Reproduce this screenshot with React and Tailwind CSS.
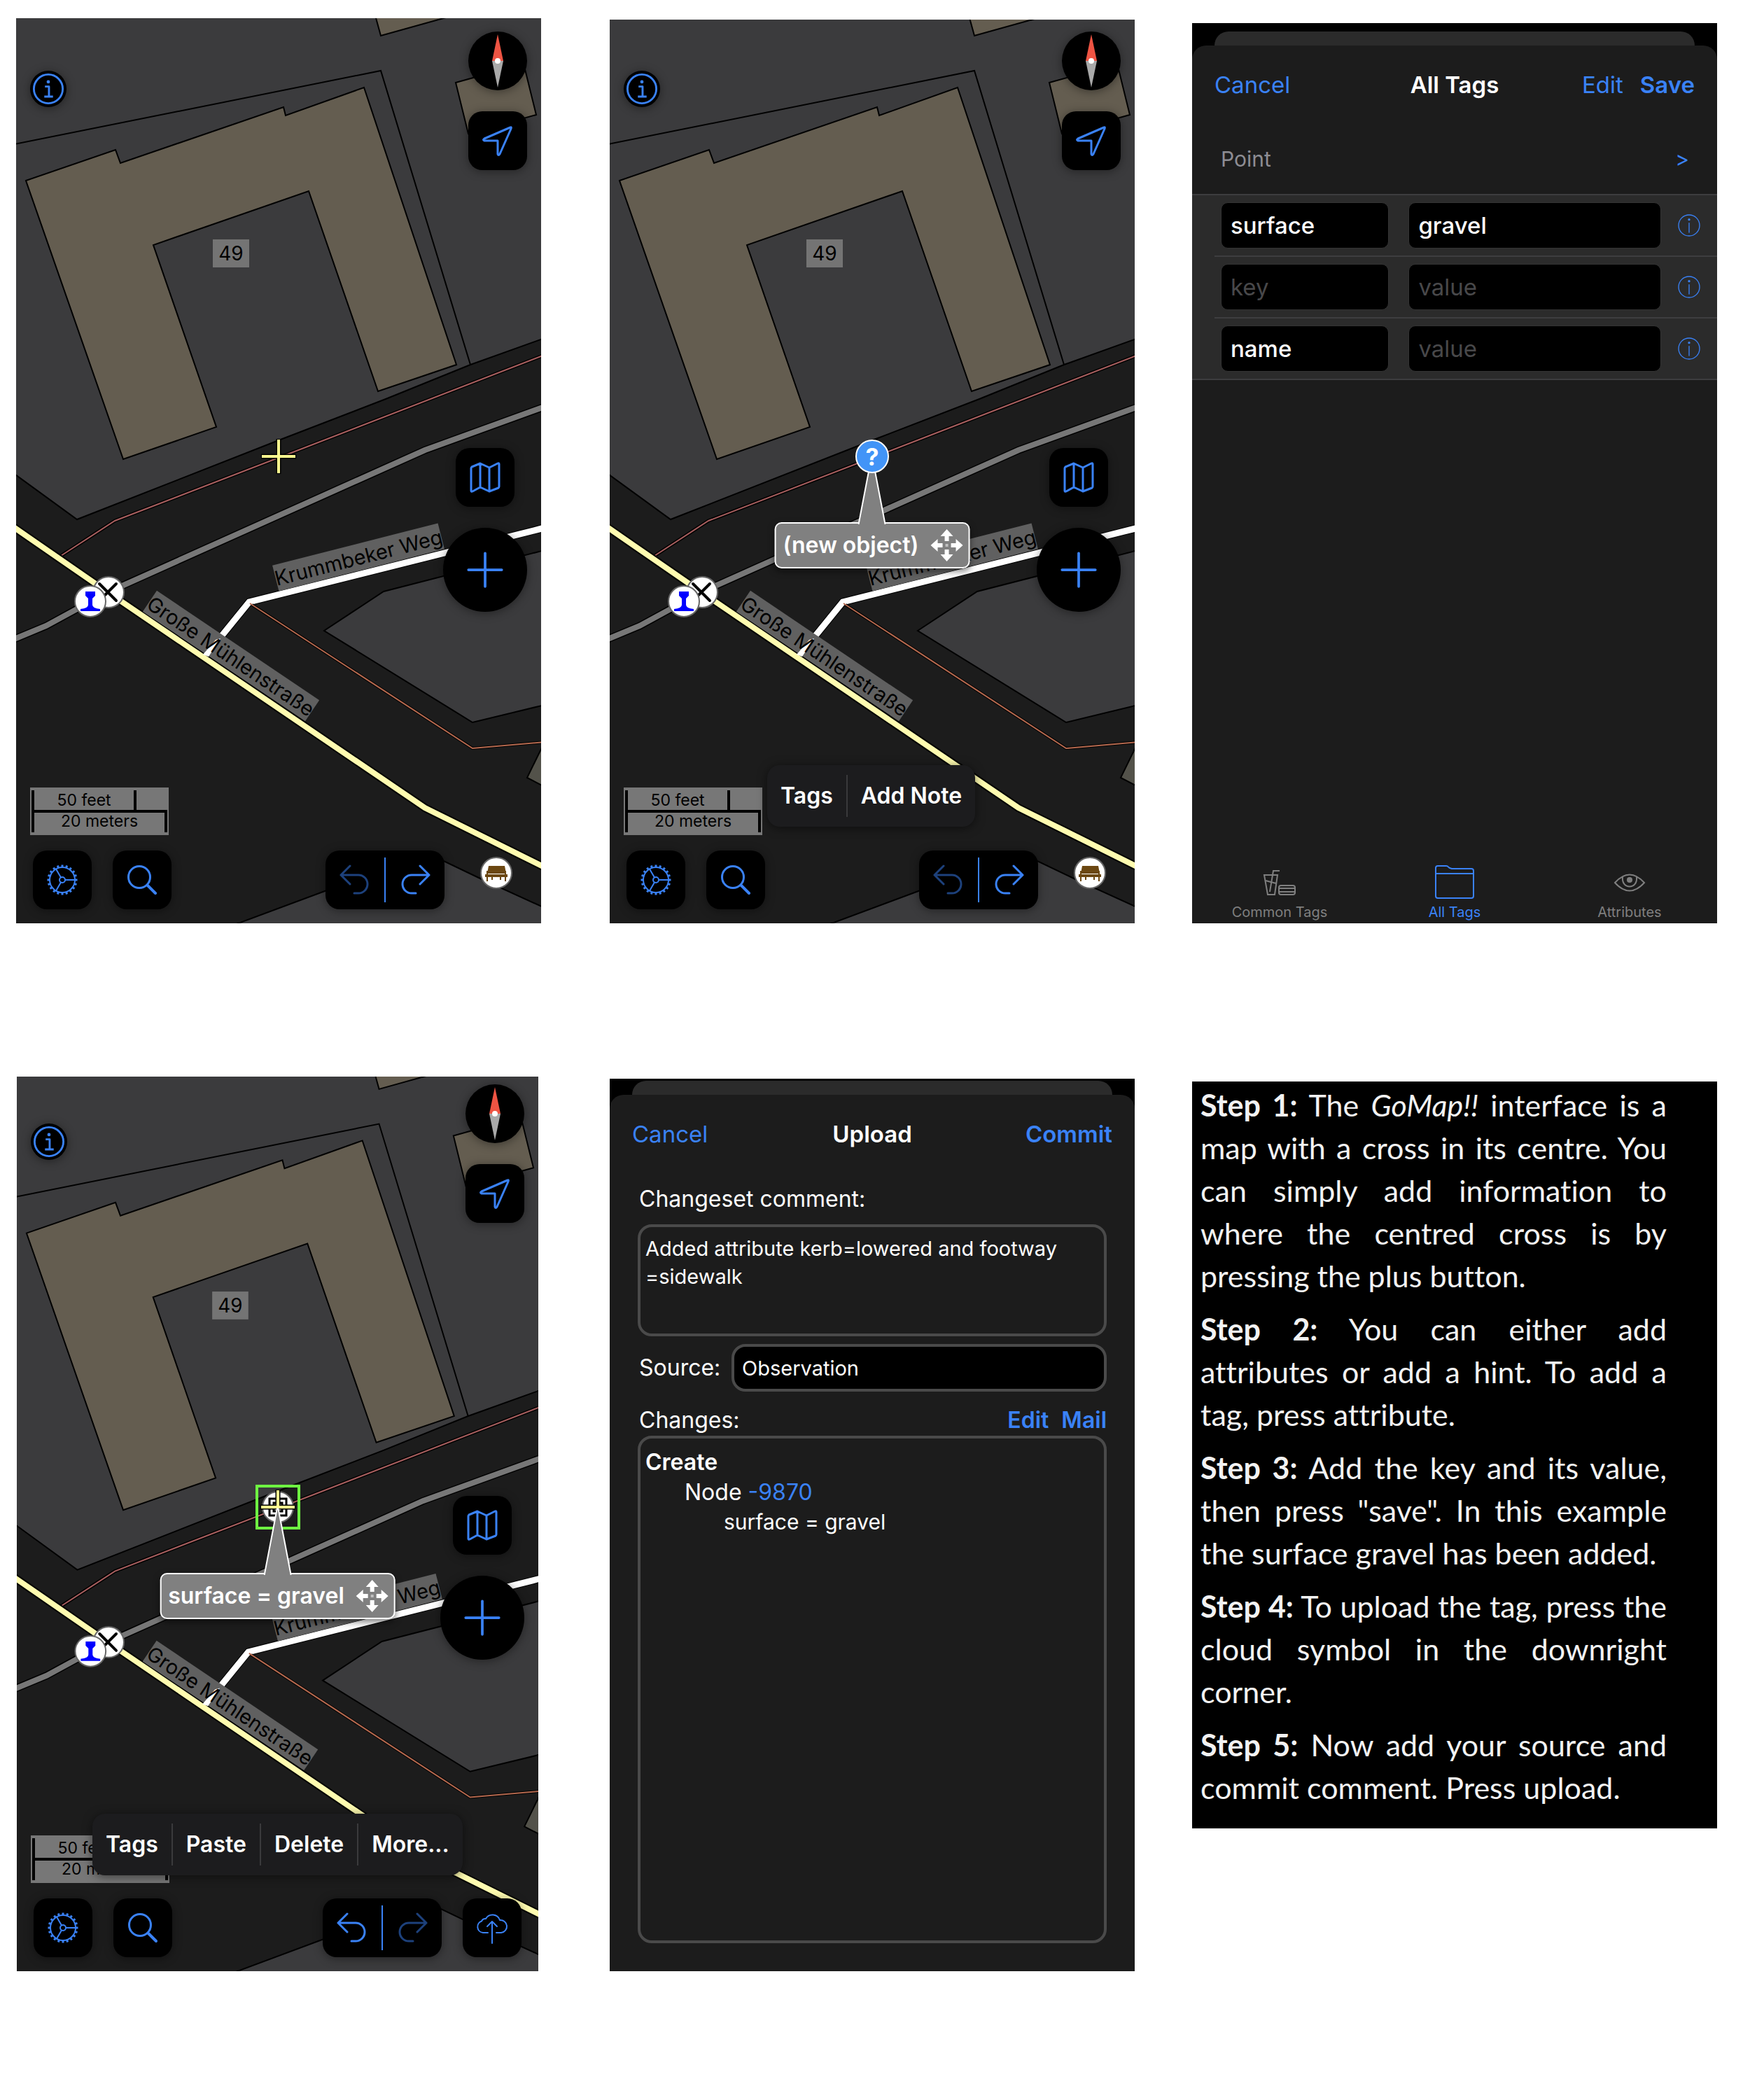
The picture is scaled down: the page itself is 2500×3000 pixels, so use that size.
import React from "react";

const BLUE = "#3a82f7";

function MapDrawing({ viewBox, bench = true }) {
  return (
    <svg className="absolute inset-0 h-full w-full" viewBox={viewBox} preserveAspectRatio="none" aria-hidden="true">
      <rect width="750" height="1293" fill="#1c1c1c" />
      <g stroke="#000" strokeWidth="2">
        <path fill="#3b3b3d" d="M-5 -5H755V457L649 495 528 544 375 603 87 716 -5 649Z" />
        <path fill="#3b3b3d" d="M440 875 525 819 755 760V981L652 1006Z" />
        <path fill="#3b3b3d" d="M312 1295 441 1247 588 1193 663 1229 755 1271V1300H312Z" />
        <path fill="none" d="M-2 180 521 75 649 495" />
        <g fill="#645d50">
          <path d="M513 -4 521 25 625 -4Z" />
          <path d="M628 92 725 65 743 138 646 165Z" />
          <path d="M14 232 142 188 149 207 382 127 385 139 497 99 629 495 517 533 418 247 196 324 286 584 153 630Z" />
        </g>
        <path fill="#53524a" d="M755 1034 730 1085 755 1098Z" />
      </g>
      <g fill="none">
        <path stroke="#000" strokeWidth="5" d="M64 768 141 718 411 614 755 481" />
        <path stroke="#a85f5f" strokeWidth="2" d="M64 768 141 718 411 614 755 481" />
        <path stroke="#000" strokeWidth="11" d="M-5 888 43 868 131 820 584 617 755 555" />
        <path stroke="#777" strokeWidth="8" d="M-5 888 43 868 131 820 584 617 755 555" />
        <path stroke="#000" strokeWidth="11" d="M268 914 333 834 755 728" />
        <path stroke="#fff" strokeWidth="9" d="M268 914 333 834 755 728" />
        <path stroke="#000" strokeWidth="4" d="M337 838 652 1043 755 1034" />
        <path stroke="#b5694f" strokeWidth="2" d="M334 836 652 1043 755 1034" />
        <path stroke="#000" strokeWidth="12" d="M-5 726 131 820 584 1128 755 1213" />
        <path stroke="#fffcb0" strokeWidth="8" d="M-5 726 131 820 584 1128 755 1213" />
      </g>
      <g fontFamily="Inter, sans-serif" fontSize="29" textAnchor="middle">
        <rect x="281" y="316" width="52" height="40" fill="#747474" />
        <text x="307" y="346" fontSize="28">
          49
        </text>
        <g transform="translate(489 770) rotate(-14.3)">
          <rect x="-122" y="-19" width="244" height="38" fill="#606060" />
          <text y="11">Krummbeker Weg</text>
        </g>
        <g transform="translate(307 911) rotate(34)">
          <rect x="-140" y="-18" width="280" height="36" fill="#606060" />
        </g>
        <path fill="#fff" d="M267 909 285 888 292 886 275 912Z" />
        <g transform="translate(307 911) rotate(34)">
          <text y="11">Große Mühlenstraße</text>
        </g>
      </g>
      <g stroke="#666" strokeWidth="2" fill="#fff">
        <circle cx="132" cy="820" r="22" />
        <path stroke="#000" strokeWidth="4" strokeLinecap="round" d="M119 808 143 832M143 808 119 832" />
        <circle cx="106" cy="833" r="22" />
        <path fill="#00f" stroke="none" d="M99 819H113V825L109 829V838Q109 843 120 844V847H92V844Q103 843 103 838V829L99 825Z" />
        {bench && <circle cx="686" cy="1221" r="22" />}
        {bench && (
          <g fill="#6b4712" stroke="none">
            <path d="M675 1211H698L700 1222H673Z" />
            <path d="M670 1223H702V1227H670ZM672 1218H674V1233H672ZM698 1218H700V1233H698ZM679 1227H681V1231H679ZM691 1227H693V1231H691Z" />
          </g>
        )}
      </g>
    </svg>
  );
}

function Icon({ children, className = "h-12 w-12", width = 3 }) {
  return (
    <svg
      className={className}
      viewBox="0 0 48 48"
      fill="none"
      stroke={BLUE}
      strokeWidth={width}
      strokeLinecap="round"
      strokeLinejoin="round"
      aria-hidden="true"
    >
      {children}
    </svg>
  );
}

const TEETH = Array.from({ length: 20 }, (_, i) => i * 18);

const GearIcon = () => (
  <Icon width={2}>
    <circle cx="24" cy="24" r="18" />
    <circle cx="24" cy="24" r="4" />
    <path d="M28 24H42M22 20.500 15 8.400M22 27.500 15 39.600" />
    {TEETH.map((a) => (
      <path key={a} strokeWidth="3" strokeLinecap="butt" d="M24 6V2.500" transform={`rotate(${a} 24 24)`} />
    ))}
  </Icon>
);

const SearchIcon = () => (
  <Icon>
    <circle cx="20" cy="20" r="15.500" />
    <path strokeWidth="4" d="M32 32 43 43" />
  </Icon>
);

const UndoIcon = () => (
  <Icon>
    <path d="M17 4 4 17 17 30M4 17H29A13 13 0 0 1 29 43H23" />
  </Icon>
);

const RedoIcon = () => (
  <Icon>
    <path d="M31 4 44 17 31 30M44 17H19A13 13 0 0 0 19 43H25" />
  </Icon>
);

const MapIcon = () => (
  <Icon>
    <path d="M4 11Q4 10 5 9L17 4 30 10 42 4Q44 3 44 5V37Q44 38 43 39L30 44 17 38 6 44Q4 45 4 43ZM17 4V38M30 10V44" />
  </Icon>
);

const LocationIcon = () => (
  <Icon>
    <path d="M42 5Q44 4 43 7L27 43Q25 46 24 43V24H5Q2 23 5 21Z" />
  </Icon>
);

const PlusIcon = () => (
  <Icon className="h-[60px] w-[60px]">
    <path d="M24 5V43M5 24H43" />
  </Icon>
);

const CloudIcon = () => (
  <Icon width={2}>
    <path d="M18 31H11A8.500 8.500 0 0 1 9 14.500A6 6 0 0 1 15 11A11 11 0 0 1 35 13A9 9 0 1 1 37 31H30M24 46V16M17 22 24 15 31 22" />
  </Icon>
);

const MoveIcon = () => (
  <svg className="h-12 w-12 shrink-0" viewBox="0 0 48 48" fill="#fff" aria-hidden="true">
    {[0, 90, 180, 270].map((a) => (
      <path key={a} d="M24 1 33 11H27V18H21V11H15Z" transform={`rotate(${a} 24 24)`} />
    ))}
    <path d="M22 22H26V26H22Z" opacity=".5" />
  </svg>
);

function MapButton({ label, className = "h-[84px] w-[84px] rounded-[20px]", children }) {
  return (
    <button
      type="button"
      aria-label={label}
      className={`flex shrink-0 items-center justify-center bg-black shadow-[0_2px_14px_rgba(0,0,0,0.4)] ${className}`}
    >
      {children}
    </button>
  );
}

function ActionMenu({ items, className }) {
  return (
    <div
      className={`absolute z-20 flex h-[88px] items-center rounded-[18px] bg-[#1c1c1e] text-[32px] font-semibold text-white shadow-[0_2px_14px_rgba(0,0,0,0.5)] ${className}`}
    >
      {items.map((t, i) => (
        <button
          key={t}
          type="button"
          className={
            i === 0
              ? "h-[60px] px-[19px] whitespace-nowrap"
              : "h-[60px] border-l-2 border-[#3a3a3c] px-[19px] whitespace-nowrap"
          }
        >
          {t}
        </button>
      ))}
    </div>
  );
}

function Callout({ text, className }) {
  return (
    <div className={`absolute left-1/2 z-10 flex -translate-x-1/2 flex-col items-center ${className}`}>
      <svg className="-mb-[3px] h-24 w-10 shrink-0" viewBox="0 0 40 96" aria-hidden="true">
        <path d="M1 96 19 2Q20 0 21 2L39 96" fill="#808080" stroke="#fff" strokeWidth="2" />
      </svg>
      <div className="-z-10 flex h-[66px] items-center gap-4 rounded-[10px] border-2 border-white bg-[#808080] pr-[7px] pl-[10px] text-[32px] font-semibold whitespace-nowrap text-white shadow-[0_4px_10px_rgba(0,0,0,0.5)]">
        {text}
        <MoveIcon />
      </div>
    </div>
  );
}

function Marker({ kind }) {
  if (kind === "cross")
    return (
      <svg className="absolute top-[600px] left-1/2 h-[52px] w-[52px] -translate-x-1/2" viewBox="0 0 52 52" aria-hidden="true">
        <path d="M26 1V51M1 26H51" stroke="#000" strokeWidth="7" />
        <path d="M26 2V50M2 26H50" stroke="#fffc8f" strokeWidth="4" />
      </svg>
    );
  if (kind === "question")
    return (
      <div className="absolute top-[600px] left-1/2 z-20 flex h-12 w-12 -translate-x-1/2 items-center justify-center rounded-full border-2 border-white bg-[#4294f7] text-[34px] font-bold text-white">
        ?
      </div>
    );
  return (
    <svg className="absolute top-[583px] left-1/2 h-16 w-16 -translate-x-1/2" viewBox="0 0 64 64" aria-hidden="true">
      <rect x="2" y="2" width="60" height="60" fill="none" stroke="#6ef442" strokeWidth="4" />
      <circle cx="32" cy="32" r="22" fill="#fff" stroke="#666" strokeWidth="2" />
      <path d="M20 20H44V44H20ZM26 26H38V38H26Z" fill="none" stroke="#000" strokeWidth="3" />
      <path d="M32 7V32M7 32H57" stroke="#000" strokeWidth="7" />
      <path d="M32 8V32M8 32H56" stroke="#fffc8f" strokeWidth="4" />
    </svg>
  );
}

function MapScreen({ className, viewBox, top, infoTop, marker, callout, menu, upload, undoOn }) {
  return (
    <section className={`relative w-full overflow-hidden ${className}`} aria-label="Map">
      <MapDrawing viewBox={viewBox} bench={!upload} />
      <Marker kind={marker} />
      {callout}
      <div className={`absolute left-5 ${infoTop}`}>
        <MapButton label="Info" className="h-[52px] w-[52px] rounded-full">
          <Icon className="h-[46px] w-[46px]">
            <circle cx="24" cy="24" r="21.500" />
            <circle cx="24" cy="13.500" r="2.500" fill={BLUE} stroke="none" />
            <path strokeLinecap="butt" d="M19 20.500H25V35M18 35.500H31" />
          </Icon>
        </MapButton>
      </div>
      <div className={`absolute right-5 flex flex-col gap-[30px] ${top}`}>
        <MapButton label="Compass" className="h-[84px] w-[84px] rounded-full">
          <svg className="h-[76px] w-6" viewBox="0 0 24 76" aria-hidden="true">
            <path d="M12 0 20 38H4Z" fill="#ee5443" />
            <path d="M12 76 20 38H4Z" fill="#a9a9a9" />
            <circle cx="12" cy="38" r="4" fill="#fff" />
          </svg>
        </MapButton>
        <MapButton label="Current location">
          <LocationIcon />
        </MapButton>
      </div>
      <div className="absolute right-5 bottom-[445px] flex flex-col items-center gap-[30px]">
        <MapButton label="Map layers">
          <MapIcon />
        </MapButton>
        <MapButton label="Add" className="h-[120px] w-[120px] rounded-full">
          <PlusIcon />
        </MapButton>
      </div>
      <div className="absolute bottom-[126px] left-5 flex h-[68px] w-[198px] flex-col bg-[#777] px-[2px] py-1 text-center text-[23px] leading-7 text-black">
        <div className="w-[150px] border-x-4 border-black">50 feet</div>
        <div className="h-8 border-x-4 border-t-4 border-black leading-6">20 meters</div>
      </div>
      {menu}
      <div className="absolute inset-x-0 bottom-5 flex items-center px-6">
        <MapButton label="Settings">
          <GearIcon />
        </MapButton>
        <div className="w-[30px]" />
        <MapButton label="Search">
          <SearchIcon />
        </MapButton>
        <div className="flex-1" />
        <div className="flex h-[84px] w-[170px] items-center rounded-[20px] bg-black shadow-[0_2px_14px_rgba(0,0,0,0.4)]">
          <button
            type="button"
            aria-label="Undo"
            className={`flex flex-1 justify-center ${undoOn ? "" : "opacity-50"}`}
          >
            <UndoIcon />
          </button>
          <div className="h-16 w-[2px] bg-[#3a82f7]" />
          <button
            type="button"
            aria-label="Redo"
            className={`flex flex-1 justify-center ${undoOn ? "opacity-50" : ""}`}
          >
            <RedoIcon />
          </button>
        </div>
        <div className="w-[30px]" />
        {upload ? (
          <MapButton label="Upload">
            <CloudIcon />
          </MapButton>
        ) : (
          <div className="w-[84px]" />
        )}
      </div>
    </section>
  );
}

function Sheet({ className, topPad, children }) {
  return (
    <section className={`flex flex-col overflow-hidden bg-black ${className} ${topPad}`}>
      <div className="mx-8 h-5 shrink-0 rounded-t-[20px] bg-[#2b2b2b]" />
      <div className="flex flex-1 flex-col rounded-t-[20px] bg-[#1c1c1c]">{children}</div>
    </section>
  );
}

function TagInput({ label, value, placeholder }) {
  return (
    <input
      aria-label={label}
      defaultValue={value}
      placeholder={placeholder}
      className="h-[66px] w-full min-w-0 rounded-[10px] border border-[#333] bg-black px-[13px] text-[33px] font-medium text-white placeholder:font-normal placeholder:text-[#48484a]"
    />
  );
}

function TagsSheet() {
  const rows = ["surface|gravel", "|", "name|"].map((r) => r.split("|"));
  return (
    <Sheet className="mt-[7px]" topPad="pt-3">
      <header className="grid h-[113px] grid-cols-3 items-center px-8 text-[33px] text-[#3a82f7]">
        <button type="button" className="justify-self-start">
          Cancel
        </button>
        <h2 className="justify-self-center font-semibold text-white">All Tags</h2>
        <div className="flex gap-6 justify-self-end">
          <button type="button">Edit</button>
          <button type="button" className="font-semibold">
            Save
          </button>
        </div>
      </header>
      <div className="flex h-[99px] items-center justify-between pr-10 pl-[41px] text-[30px] text-[#8d8d93]">
        <span>Point</span>
        <button type="button" aria-label="Next" className="text-[#3a82f7]">
          &gt;
        </button>
      </div>
      <div className="border-y-2 border-[#3d3d3f] bg-[#2b2b2b]">
        {rows.map(([k, v], i) => (
          <div key={i} className="pl-8">
            <div
              className={
                i === 0
                  ? "flex h-[86px] items-center pr-6 pl-[9px]"
                  : "flex h-[88px] items-center border-t-2 border-[#3d3d3f] pr-6 pl-[9px]"
              }
            >
              <div className="grid min-w-0 flex-1 grid-cols-[2fr_3fr] gap-7">
                <TagInput label="Key" value={k} placeholder="key" />
                <TagInput label="Value" value={v} placeholder="value" />
              </div>
              <button type="button" aria-label="Tag info" className="ml-6">
                <Icon className="h-8 w-8" width={2}>
                  <circle cx="24" cy="24" r="22.500" />
                  <circle cx="24" cy="11.500" r="2.500" fill={BLUE} stroke="none" />
                  <path d="M24 19V39" />
                </Icon>
              </button>
            </div>
          </div>
        ))}
      </div>
      <nav className="mt-auto grid grid-cols-3 pb-1 text-center text-[20px] leading-6 text-[#7f7f7f]">
        <button type="button" className="flex flex-col items-center justify-end gap-[6px]">
          <svg className="h-12 w-12" viewBox="0 0 48 48" fill="none" stroke="#7f7f7f" strokeWidth="2" aria-hidden="true">
            <path d="M2 13H21L17 41H7ZM10 37 15 7H24M4 21 19 25" />
            <rect x="23" y="28" width="23" height="13" rx="3" />
            <path d="M23 32H46M23 37H46" />
          </svg>
          Common Tags
        </button>
        <button type="button" className="flex flex-col items-center justify-end gap-[2px] text-[#3a82f7]">
          <svg className="h-14 w-14" viewBox="0 0 56 56" fill="none" stroke={BLUE} strokeWidth="2" aria-hidden="true">
            <path d="M4 4H16Q18 4 19 5.500T24 8H52Q55 8 55 11V47Q55 50 52 50H4Q1 50 1 47V7Q1 4 4 4ZM1 15H55" />
          </svg>
          All Tags
        </button>
        <button type="button" className="flex flex-col items-center justify-end gap-[6px]">
          <svg className="h-12 w-12" viewBox="0 0 48 48" fill="none" stroke="#7f7f7f" strokeWidth="2" aria-hidden="true">
            <path d="M3 24Q24 1 45 24Q24 47 3 24Z" />
            <path d="M14 16C12 34 36 34 34 16" />
            <ellipse cx="24" cy="20" rx="4" ry="4" fill="#7f7f7f" stroke="none" />
          </svg>
          Attributes
        </button>
      </nav>
    </Sheet>
  );
}

function UploadSheet() {
  return (
    <Sheet className="mt-[3px]" topPad="pt-[3px]">
      <header className="grid h-[113px] grid-cols-3 items-center px-8 text-[33px] text-[#3a82f7]">
        <button type="button" className="justify-self-start">
          Cancel
        </button>
        <h2 className="justify-self-center font-semibold text-white">Upload</h2>
        <button type="button" className="justify-self-end font-semibold">
          Commit
        </button>
      </header>
      <div className="flex flex-1 flex-col px-10 pb-10 text-[32px] leading-10 text-white">
        <label htmlFor="comment" className="mt-4 ml-[2px]">
          Changeset comment:
        </label>
        <textarea
          id="comment"
          className="mt-4 h-40 resize-none rounded-[20px] border-4 border-[#4a4a4a] bg-transparent px-[7px] py-[11px] text-[29px] leading-10 text-white"
          defaultValue={"Added attribute kerb=lowered and footway\n=sidewalk"}
        />
        <div className="mt-[11px] flex items-center justify-between">
          <label htmlFor="source" className="ml-[2px]">
            Source:
          </label>
          <input
            id="source"
            className="h-[68px] w-4/5 rounded-[20px] border-4 border-[#4a4a4a] bg-black px-[11px] text-[29px] text-white"
            defaultValue="Observation"
          />
        </div>
        <div className="mt-[21px] flex items-center justify-between">
          <span className="ml-[2px]">Changes:</span>
          <div className="flex gap-[18px] font-semibold text-[#3a82f7]">
            <button type="button">Edit</button>
            <button type="button">Mail</button>
          </div>
        </div>
        <div className="mt-[2px] flex-1 rounded-[20px] border-4 border-[#4a4a4a] px-[7px] py-3 leading-[43px]">
          <p className="font-semibold">Create</p>
          <p className="pl-14">
            Node{" "}
            <a href="#node" className="text-[#3a82f7]">
              -9870
            </a>
          </p>
          <p className="pl-28 text-[30px]">surface = gravel</p>
        </div>
      </div>
    </Sheet>
  );
}

function Steps() {
  return (
    <section className="mt-[7px] self-start bg-black pt-[3px] pr-[72px] pb-7 pl-3 font-['Lato',sans-serif] text-[43px] leading-[61px] text-[#f2f2f2] [font-variant-ligatures:none]">
      <div className="flex flex-col gap-[15px] text-justify">
        <p>
          <b>Step 1:</b> The <i>GoMap!!</i> interface is a map with a cross in its centre. You can simply add
          information to where the centred cross is by pressing the plus button.
        </p>
        <p>
          <b>Step 2:</b> You can either add attributes or add a hint. To add a tag, press attribute.
        </p>
        <p>
          <b>Step 3:</b> Add the key and its value, then press "save". In this example the surface gravel has been
          added.
        </p>
        <p>
          <b>Step 4:</b> To upload the tag, press the cloud symbol in the downright corner.
        </p>
        <p>
          <b>Step 5:</b> Now add your source and commit comment. Press upload.
        </p>
      </div>
    </section>
  );
}

export default function App() {
  return (
    <main className="flex min-h-screen flex-col gap-[219px] bg-white pt-[26px] pr-[47px] pl-[23px] font-['Inter',sans-serif]">
      <div className="flex">
        <div className="flex min-w-0 flex-1 items-end">
          <MapScreen className="aspect-[750/1293]" viewBox="0 0 750 1293" top="top-[19px]" infoTop="top-[75px]" marker="cross" />
        </div>
        <div className="w-[98px] shrink-0" />
        <div className="flex min-w-0 flex-1 items-end">
          <MapScreen
            className="aspect-[750/1291]"
            viewBox="0 2 750 1291"
            top="top-[17px]"
            infoTop="top-[73px]"
            marker="question"
            callout={<Callout text="(new object)" className="top-[625px]" />}
            menu={<ActionMenu items={["Tags", "Add Note"]} className="bottom-[138px] left-[225px]" />}
          />
        </div>
        <div className="w-[82px] shrink-0" />
        <div className="flex min-w-0 flex-1 flex-col [&>section]:flex-1">
          <TagsSheet />
        </div>
      </div>
      <div className="flex">
        <div className="min-w-0 flex-1">
          <div className="pr-1 pl-px">
            <MapScreen
              className="aspect-[745/1278]"
              viewBox="0 7 750 1286"
              top="top-[11px]"
              infoTop="top-[67px]"
              marker="selected"
              undoOn
              upload
              callout={<Callout text="surface = gravel" className="top-[616px]" />}
              menu={<ActionMenu items={["Tags", "Paste", "Delete", "More..."]} className="bottom-[137px] left-[108px]" />}
            />
          </div>
        </div>
        <div className="w-[98px] shrink-0" />
        <div className="flex min-w-0 flex-1 flex-col [&>section]:flex-1">
          <UploadSheet />
        </div>
        <div className="w-[82px] shrink-0" />
        <div className="flex min-w-0 flex-1 flex-col">
          <Steps />
        </div>
      </div>
    </main>
  );
}
